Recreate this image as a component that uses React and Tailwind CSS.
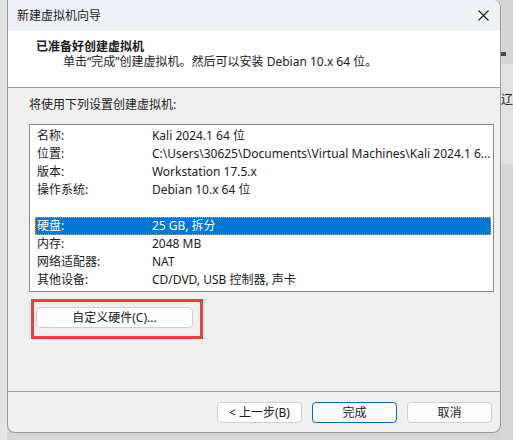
import React from "react";

const font = { fontFamily: '"Noto Sans", "Noto Sans CJK SC", sans-serif' };

const rows = [
  ["名称:", "Kali 2024.1 64 位"],
  ["位置:", "C:\\Users\\30625\\Documents\\Virtual Machines\\Kali 2024.1 6..."],
  ["版本:", "Workstation 17.5.x"],
  ["操作系统:", "Debian 10.x 64 位"],
  ["", ""],
  ["硬盘:", "25 GB, 拆分", true],
  ["内存:", "2048 MB"],
  ["网络适配器:", "NAT"],
  ["其他设备:", "CD/DVD, USB 控制器, 声卡"],
];

function Btn({ children, primary }) {
  return (
    <div
      className={
        "w-[85px] h-[21px] flex items-center justify-center rounded-[4px] bg-[#fdfdfd] text-[12px] text-[#1a1a1a] border " +
        (primary ? "border-[#0067c0]" : "border-[#d0d0d0]")
      }
    >
      {children}
    </div>
  );
}

export default function App() {
  return (
    <div
      className="w-[513px] h-[440px] bg-[#d6d6d6] flex overflow-hidden text-[#1a1a1a]"
      style={font}
    >
      <div className="w-[7px] h-full bg-[#e4e4e4]" />
      <div className="w-[499px] h-[433px] flex flex-col bg-[#f0f0f0] border-l border-r border-b border-[#9a9a9a] rounded-tr-[8px] rounded-b-[8px] overflow-hidden">
        {/* title bar */}
        <div className="h-[31px] flex items-center justify-between bg-[#eef2f7] pl-[9px] pr-[11px]">
          <span className="text-[12px]">新建虚拟机向导</span>
          <svg width="11" height="11" viewBox="0 0 11 11">
            <path d="M0.5 0.5 L10.5 10.5 M10.5 0.5 L0.5 10.5" stroke="#1a1a1a" strokeWidth="1.1" />
          </svg>
        </div>
        {/* header */}
        <div className="h-[57px] bg-white border-b border-[#a0a0a0] pt-[8px]">
          <div className="pl-[28px] text-[12px] leading-[16px] font-bold">已准备好创建虚拟机</div>
          <div className="pl-[55px] text-[12px] leading-[16px] mt-[-1px]">
            单击“完成”创建虚拟机。然后可以安装 Debian 10.x 64 位。
          </div>
        </div>
        {/* body */}
        <div className="flex-1 flex flex-col pl-[21px]">
          <div className="pt-[9px] text-[12px] leading-[16px]">将使用下列设置创建虚拟机:</div>
          <div className="mt-[11px] w-[465px] h-[168px] bg-white border border-[#828790] pt-[2px] pl-[5px] pr-[2px]">
            {rows.map(([k, v, sel], i) => (
              <div
                key={i}
                className={
                  "h-[18px] flex items-center pl-[2px] text-[12px] " +
                  (sel ? "bg-[#0078d7] text-white outline-1 outline-dotted outline-[#e0a040] -outline-offset-1" : "")
                }
              >
                <span className="w-[115px] shrink-0">{k}</span>
                <span className="whitespace-nowrap overflow-hidden">{v}</span>
              </div>
            ))}
          </div>
          <div className="mt-[7px] ml-[2px] w-[172px] h-[40px] border-[3px] border-[#f03c3c] pt-[5px] pl-[2px]">
            <div className="w-[157px] h-[21px] flex items-center justify-center rounded-[4px] bg-[#fdfdfd] border border-[#d0d0d0] text-[12px]">
              自定义硬件(C)...
            </div>
          </div>
        </div>
        {/* footer */}
        <div className="h-[41px] border-t border-[#a0a0a0] flex justify-end gap-[10px] pt-[10px] pr-[8px]">
          <Btn>&lt; 上一步(B)</Btn>
          <Btn primary>完成</Btn>
          <Btn>取消</Btn>
        </div>
      </div>
      <div className="flex-1 h-full flex flex-col">
        <div className="h-[46px] bg-[#d6d6d6]" />
        <div className="h-[4px] w-[5px] bg-[#3d4a5c] mt-[6px]" />
        <div className="h-[100px] bg-[#e2e2e2] mt-[8px] overflow-hidden text-[12px] pt-[30px] leading-none">辽</div>
        <div className="flex-1 bg-[#d8d8d8]" />
      </div>
    </div>
  );
}
